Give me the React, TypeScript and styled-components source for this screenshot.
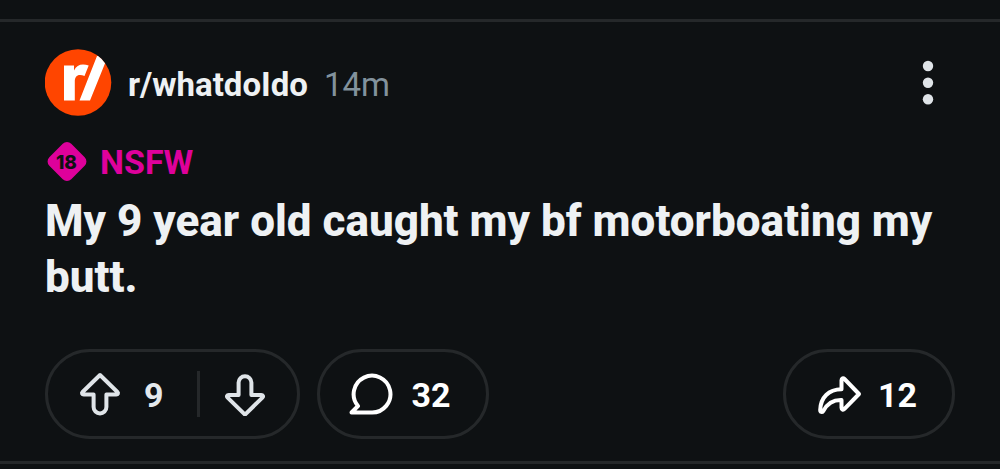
import React from "react";
import styled, { createGlobalStyle } from "styled-components";

const GlobalStyle = createGlobalStyle`
  * { box-sizing: border-box; }
  body {
    margin: 0;
    background: #0e1113;
    color: #eef1f3;
    font-family: Roboto, "Liberation Sans", sans-serif;
  }
  svg { display: block; flex: none; }
`;

const Feed = styled.main`
  padding-top: 19px;
`;

const Post = styled.article`
  border: solid #25282a;
  border-width: 3px 0;
  padding: 27px 45px 22px 45px;
`;

const Header = styled.header`
  display: flex;
  align-items: center;
  gap: 16px;
`;

const Community = styled.a`
  display: flex;
  align-items: center;
  gap: 16px;
  color: inherit;
  font-size: 33px;
  line-height: 40px;
  font-weight: 700;
  text-decoration: none;
`;

const Name = styled.span`
  padding-top: 4px;
`;

const Age = styled.time`
  flex: 1;
  padding-top: 4px;
  font-size: 33px;
  line-height: 40px;
  color: #82929d;
`;

const IconButton = styled.button`
  display: flex;
  padding: 0;
  border: 0;
  background: none;
  color: #dfe4e8;
  cursor: pointer;
`;

const Flag = styled.div`
  display: flex;
  align-items: center;
  gap: 11px;
  margin-top: 23px;
  color: #de019b;
  font-size: 34px;
  line-height: 44px;
  font-weight: 700;
`;

const Title = styled.h1`
  margin: 9px 0 0;
  font-size: 44px;
  line-height: 56px;
  font-weight: 800;
`;

const Actions = styled.footer`
  display: flex;
  gap: 17px;
  margin-top: 44px;
`;

const Pill = styled.div`
  display: flex;
  align-items: center;
  height: 90px;
  padding: 0 30px;
  border: 3px solid #25282a;
  border-radius: 45px;
  font-size: 34px;
  font-weight: 700;
`;

const PillButton = styled(Pill).attrs({ as: "button" })<{ $end?: boolean }>`
  gap: 16px;
  padding: 0 35px 0 28px;
  margin-left: ${(p) => (p.$end ? "auto" : "0")};
  background: none;
  color: #ffffff;
  font-family: inherit;
  cursor: pointer;
`;

const Count = styled.span`
  padding-top: 2px;
`;

const Score = styled(Count)`
  margin: 0 33px 0 22px;
  color: #e4e9ed;
`;

const Divider = styled.span`
  width: 3px;
  height: 46px;
  margin-right: 23px;
  background: #25282a;
`;

const stroke = {
  fill: "none",
  stroke: "currentColor",
  strokeWidth: 4,
  strokeLinejoin: "round" as const,
  strokeLinecap: "round" as const,
};

const Avatar = () => (
  <svg width="67" height="68" viewBox="0 0 67 68" aria-hidden="true">
    <clipPath id="disc">
      <circle cx="33" cy="33.5" r="33.3" />
    </clipPath>
    <g clipPath="url(#disc)">
      <rect width="67" height="68" fill="#ff4500" />
      <path
        fill="#fff"
        d="M19 16.500H29V21.500C31 17.500 34 15.600 38 15.600C40 15.600 42 15.900 43.700 16.500L39.500 27C38 26.300 36.500 26 35 26C31.500 26 29.800 28.500 29.800 32.500V51.500H19ZM34.500 51.500L52 7H63L45 51.500Z"
      />
    </g>
  </svg>
);

const MatureBadge = () => (
  <svg width="44" height="44" viewBox="0 0 44 44" aria-hidden="true">
    <rect x="6.500" y="6" width="31" height="31" rx="6" fill="#de019b" transform="rotate(45 22 21.500)" />
    <text x="21.500" y="28.500" textAnchor="middle" fontSize="19" fontWeight="800" fontFamily="Inter, sans-serif" fill="#0e1113">
      18
    </text>
  </svg>
);

const VoteArrow = ({ down }: { down?: boolean }) => (
  <svg width="44" height="44" viewBox="0 0 44 44" aria-hidden="true">
    <path
      {...stroke}
      transform={down ? "rotate(180 22 22.800)" : undefined}
      d="M22 3L39.400 20C40.600 21.200 39.900 22.500 38.300 22.500H28.400V35A6.400 6.400 0 0 1 15.600 35V22.500H5.700C4.100 22.500 3.400 21.200 4.600 20Z"
    />
  </svg>
);

const CommentIcon = () => (
  <svg width="48" height="44" viewBox="0 0 48 44" aria-hidden="true">
    <path {...stroke} d="M23.500 40.500H3.500L10 34A18.400 18.400 0 1 1 23.500 40.500Z" />
  </svg>
);

const ShareIcon = () => (
  <svg width="48" height="44" viewBox="0 0 48 44" aria-hidden="true">
    <path
      {...stroke}
      d="M27.500 17.300V8.300C27.500 6.200 29.200 5.700 30.500 7L45 22L30.500 36.900C29.200 38.200 27.500 37.700 27.500 35.700V27.900C19 27.700 13.500 30.700 9.400 38.900C8.500 40.700 6.200 40.100 6.200 37.900C6.700 25.500 14.500 17.500 27.500 17.300Z"
    />
  </svg>
);

const MoreIcon = () => (
  <svg width="56" height="56" viewBox="0 0 56 56" fill="currentColor" aria-hidden="true">
    <circle cx="29" cy="11" r="5.200" />
    <circle cx="29" cy="27.700" r="5.200" />
    <circle cx="29" cy="44.300" r="5.200" />
  </svg>
);

export default function App() {
  return (
    <>
      <GlobalStyle />
      <Feed>
        <Post>
          <Header>
            <Community href="#community">
              <Avatar />
              <Name>r/whatdoIdo</Name>
            </Community>
            <Age>14m</Age>
            <IconButton aria-label="More options">
              <MoreIcon />
            </IconButton>
          </Header>
          <Flag>
            <MatureBadge />
            NSFW
          </Flag>
          <Title>My 9 year old caught my bf motorboating my butt.</Title>
          <Actions>
            <Pill>
              <IconButton aria-label="Upvote">
                <VoteArrow />
              </IconButton>
              <Score>9</Score>
              <Divider />
              <IconButton aria-label="Downvote">
                <VoteArrow down />
              </IconButton>
            </Pill>
            <PillButton aria-label="32 comments">
              <CommentIcon />
              <Count>32</Count>
            </PillButton>
            <PillButton $end aria-label="Share, 12">
              <ShareIcon />
              <Count>12</Count>
            </PillButton>
          </Actions>
        </Post>
      </Feed>
    </>
  );
}
